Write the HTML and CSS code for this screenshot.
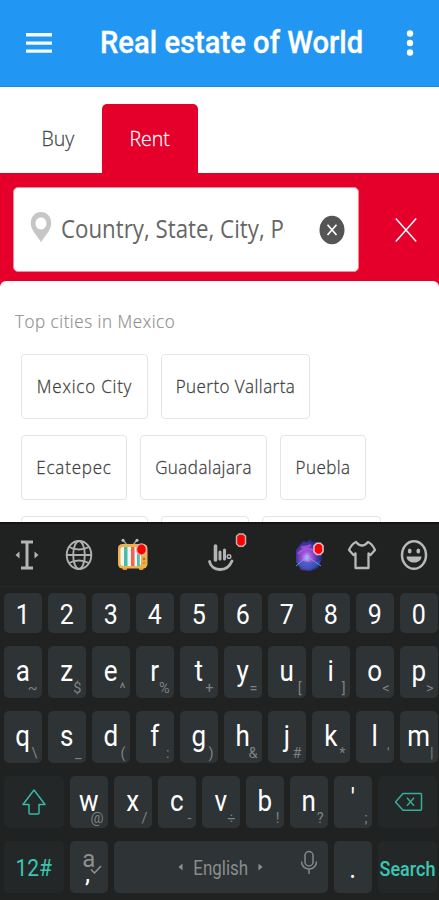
FILE: index.html
```html
<!DOCTYPE html>
<html lang="en">
<head>
<meta charset="utf-8">
<title>Real estate of World</title>
<link rel="stylesheet" href="styles.css">
</head>
<body>
<div class="screen">
  <header class="appbar">
    <svg class="menu" width="28" height="22" viewBox="0 0 28 22" fill="#f4fbff"><path d="M1 1h26v3.400H1zM1 9.400h26v3.400H1zM1 17.400h26v3.400H1z"/></svg>
    <h1 class="title"><span class="t">Real estate of World</span></h1>
    <svg class="dots" width="8" height="28" viewBox="0 0 8 28" fill="#fff"><circle cx="4" cy="4.500" r="3.200"/><circle cx="4" cy="14" r="3.200"/><circle cx="4" cy="23.500" r="3.200"/></svg>
  </header>
  <nav class="tabs">
    <a class="tab"><span class="t">Buy</span></a>
    <a class="tab active"><span class="t">Rent</span></a>
  </nav>
  <section class="search">
    <div class="field">
      <svg class="pin" width="22" height="32" viewBox="0 0 22 32"><path fill="#c6c6c6" fill-rule="evenodd" d="M11 1C5 1 .8 5.800.8 12c0 3.400 1.200 6 3 9L11 31l7.200-10c1.800-3 3-5.600 3-9C21.200 5.800 17 1 11 1Zm0 5.600c3.200 0 5.500 2.500 5.500 5.900S14.200 18.400 11 18.400s-5.500-2.500-5.500-5.900S7.800 6.600 11 6.600Z"/></svg>
      <div class="query"><span class="t">Country, State, City, Po</span></div>
      <svg class="clear" width="26" height="30" viewBox="0 0 26 30"><ellipse cx="13" cy="15" rx="12.500" ry="14.300" fill="#555"/><path d="M8.500 9.800l9 10.200M17.500 9.800l-9 10.200" stroke="#fff" stroke-width="1.700"/></svg>
    </div>
    <svg class="close" width="22" height="26" viewBox="0 0 22 26"><path d="M.8 1.500l20.400 23M21.200 1.500L.8 24.500" stroke="#fff" stroke-width="1.500"/></svg>
  </section>
  <main class="cities">
    <h2 class="heading"><span class="t">Top cities in Mexico</span></h2>
    <div class="chips">
      <div class="row"><a class="chip c126 wide"><span class="t">Mexico City</span></a><a class="chip c149"><span class="t">Puerto Vallarta</span></a></div>
      <div class="row"><a class="chip c105 wide"><span class="t">Ecatepec</span></a><a class="chip c126"><span class="t">Guadalajara</span></a><a class="chip c85"><span class="t">Puebla</span></a></div>
      <div class="row"><a class="chip c126"></a><a class="chip c88"></a><a class="chip c118"></a></div>
    </div>
  </main>
  <section class="keyboard">
    <div class="tools">
      <svg width="24" height="30" viewBox="0 0 24 30"><path d="M6 2h12M6 28h12M12 2v26" stroke="#b4b4b4" stroke-width="3" fill="none"/><path d="M4.500 11.500v7L.5 15zM19.500 11.500v7l4-3.500z" fill="#b4b4b4"/></svg>
      <svg width="28" height="32" viewBox="0 0 28 32" fill="none" stroke="#b0b0b0" stroke-width="1.900"><ellipse cx="14" cy="16" rx="12.300" ry="14"/><ellipse cx="14" cy="16" rx="5.800" ry="14"/><path d="M1.700 16h24.600M4 8q10 5 20 0M4 24q10-5 20 0"/></svg>
      <svg class="tv" width="32" height="34" viewBox="0 0 32 34"><path d="M10 7L6 2M16 7l4-5" stroke="#8e989c" stroke-width="1.600"/><circle cx="6" cy="2.300" r="1.500" fill="#b9c1c4"/><circle cx="20" cy="2.300" r="1.500" fill="#b9c1c4"/><path d="M5 29h5v3H6zM22 29h5l-1 3h-4z" fill="#d9962d"/><rect x="1" y="6" width="29.500" height="24.500" rx="4.500" fill="#ecb250"/><rect x="3.500" y="9" width="20.500" height="19" rx="3" fill="#f6f5ec"/><path d="M7 9h3.500v19H7z" fill="#45bda9"/><path d="M14 9h3.500v19H14z" fill="#ee6357"/><path d="M20 9h2.800v19H20z" fill="#4dbfae"/><circle cx="27" cy="21" r="1.400" fill="#b87825"/><path d="M25.500 25h3" stroke="#b87825"/><ellipse cx="24.500" cy="11.500" rx="5.600" ry="6.200" fill="#d4b4a4"/><ellipse cx="24.500" cy="11.500" rx="4.300" ry="4.900" fill="#f00"/></svg>
      <svg class="hand" width="44" height="42" viewBox="0 0 44 42"><path d="M8.500 13v14" stroke="#b4b4b4" stroke-width="3.600" stroke-linecap="round"/><path d="M13 19v7M17.500 17v9" stroke="#b4b4b4" stroke-width="3" stroke-linecap="round"/><circle cx="22" cy="23.500" r="1.800" fill="none" stroke="#b4b4b4" stroke-width="1.500"/><path d="M2.500 28.500C4.500 38.500 20 40 25 28" stroke="#b4b4b4" stroke-width="2.800" fill="none" stroke-linecap="round"/><path d="M29.500 3.200L32 1h4l2.500 2.200v7.600L36 13.200h-4l-2.500-2.400z" fill="#f00" stroke="#bdb3ae" stroke-width="1.500"/></svg>
      <svg width="30" height="34" viewBox="0 0 30 34"><defs><radialGradient id="orb" cx=".42" cy=".58" r=".62"><stop offset="0" stop-color="#a9c6ff"/><stop offset=".28" stop-color="#a955d8"/><stop offset=".65" stop-color="#4736a3"/><stop offset="1" stop-color="#15286e"/></radialGradient></defs><path d="M9 3l4 1 3-3 2 3 4-1 5 8 1 10-4 9-8 3-9-1-5-8V12z" fill="url(#orb)"/><path d="M2 23q5 8 13 8t12-9q-6 3-12 2T2 23" fill="#2365bd" opacity=".65"/><path d="M7 9q5 1 10-2M4 16q6-7 15-4" stroke="#b058e0" stroke-width="2.500" fill="none" opacity=".7"/><path d="M2 28l10-9 5 2 10 7" stroke="#82a6f0" stroke-width=".8" fill="none"/><path d="M20 7.800l2.800-2.600h3.600l2.600 2.600v6l-2.600 2.700h-3.600L20 13.800z" fill="#f00" stroke="#e4bdc4" stroke-width="1.600"/></svg>
      <svg width="30" height="32" viewBox="0 0 30 32"><path d="M9 3q6 7 12 0 4 1.500 7 8l-4.500 5-2-1.500V29H8.500V14.500l-2 1.500L2 11q3-6.500 7-8Z" fill="none" stroke="#b8b8b8" stroke-width="2.300" stroke-linejoin="round"/></svg>
      <svg width="28" height="32" viewBox="0 0 28 32"><ellipse cx="14" cy="16" rx="12" ry="13.800" fill="none" stroke="#b8b8b8" stroke-width="2.500"/><ellipse cx="9.700" cy="12" rx="1.900" ry="2.500" fill="#b8b8b8"/><ellipse cx="18.300" cy="12" rx="1.900" ry="2.500" fill="#b8b8b8"/><path d="M6.500 17.500h15c-.5 8-14.500 8-15 0Z" fill="#b8b8b8"/></svg>
    </div>
    <div class="keys digits"><b class="key"><i>1</i></b><b class="key"><i>2</i></b><b class="key"><i>3</i></b><b class="key"><i>4</i></b><b class="key"><i>5</i></b><b class="key"><i>6</i></b><b class="key"><i>7</i></b><b class="key"><i>8</i></b><b class="key"><i>9</i></b><b class="key"><i>0</i></b></div>
    <div class="keys"><b class="key"><i>a</i><u>~</u></b><b class="key"><i>z</i><u>$</u></b><b class="key"><i>e</i><u>^</u></b><b class="key"><i>r</i><u>%</u></b><b class="key"><i>t</i><u>+</u></b><b class="key"><i>y</i><u>=</u></b><b class="key"><i>u</i><u>[</u></b><b class="key"><i>i</i><u>]</u></b><b class="key"><i>o</i><u>&lt;</u></b><b class="key"><i>p</i><u>&gt;</u></b></div>
    <div class="keys"><b class="key"><i>q</i><u>\</u></b><b class="key"><i>s</i><u>_</u></b><b class="key"><i>d</i><u>(</u></b><b class="key"><i>f</i><u>:</u></b><b class="key"><i>g</i><u>)</u></b><b class="key"><i>h</i><u>&amp;</u></b><b class="key"><i>j</i><u>#</u></b><b class="key"><i>k</i><u>*</u></b><b class="key"><i>l</i><u>'</u></b><b class="key"><i>m</i><u>|</u></b></div>
    <div class="keys third">
      <b class="key side"><svg width="26" height="28" viewBox="0 0 26 28"><path d="M13 2L2 16.500h6V25q0 1 1 1h8q1 0 1-1v-8.500h6Z" fill="none" stroke="#38b9a6" stroke-width="1.500" stroke-linejoin="round"/></svg></b>
      <b class="key"><i>w</i><u>@</u></b><b class="key"><i>x</i><u>/</u></b><b class="key"><i>c</i><u>-</u></b><b class="key"><i>v</i><u>÷</u></b><b class="key"><i>b</i><u>!</u></b><b class="key"><i>n</i><u>?</u></b><b class="key"><i class="quote">'</i><u>;</u></b>
      <b class="key side"><svg class="erase" width="30" height="20" viewBox="0 0 30 20"><path d="M9 1.500h17.500q1 0 1 1v14.800q0 1-1 1H9L1.500 10Z" fill="none" stroke="#35ae9e" stroke-width="1.500" stroke-linejoin="round"/><path d="M13 5.800l7 8M20 5.800l-7 8" stroke="#35ae9e" stroke-width="1.400"/></svg></b>
    </div>
    <div class="keys fourth">
      <b class="key side"><span class="word num">12#</span></b>
      <b class="key alt"><span class="alt-a">a</span><span class="comma">,</span><svg class="tick" width="12" height="9" viewBox="0 0 12 9"><path d="M1 4.500L4.500 8 11 1" fill="none" stroke="#909394" stroke-width="1.500"/></svg></b>
      <b class="key space"><svg width="5" height="8" viewBox="0 0 5 8"><path d="M4.500.5v7L.5 4z" fill="#8d9091"/></svg><span class="lang">English</span><svg width="5" height="8" viewBox="0 0 5 8"><path d="M.5.5v7l4-3.500z" fill="#8d9091"/></svg>
        <svg class="mic" width="18" height="25" viewBox="0 0 18 25" fill="none" stroke="#85898a" stroke-width="1.500"><rect x="5" y="1.500" width="8" height="14.500" rx="4"/><path d="M1.500 11.500c0 10 15 10 15 0M9 19v5"/></svg></b>
      <b class="key"><i class="dot">.</i></b>
      <b class="key side"><span class="word go">Search</span></b>
    </div>
  </section>
</div>
</body>
</html>
```
FILE: styles.css
```css
* { box-sizing: border-box; }
body { margin: 0; font-family: "Open Sans", "Noto Sans", sans-serif; background: #fff; }
.screen { width: 439px; height: 900px; overflow: hidden; display: flex; flex-direction: column; }
.t { display: inline-block; white-space: nowrap; transform-origin: 0 50%; flex: none; }
svg { display: block; flex: none; }

.appbar { height: 87px; flex: none; background: #2296f3; border-bottom: 1px solid #168bea; display: flex; align-items: center; padding: 0 25px; }
.menu { margin-top: -1px; }
.title { margin: 0 auto 0 47px; font: 500 28px/40px Roboto, sans-serif; color: #fff; width: 264px; -webkit-text-stroke: .3px #fff; }
.title .t { transform: scale(1.042, 1.12); }

.tabs { height: 86px; flex: none; display: flex; align-items: flex-end; padding-left: 14px; }
.tab { width: 88px; height: 69px; display: flex; align-items: center; justify-content: center; font-size: 19px; line-height: 24px; color: #3f484b; font-weight: 300; padding-bottom: 2px; -webkit-text-stroke: .25px; }
.tab .t { transform: scale(1.03, 1.09); transform-origin: 50% 50%; }
.tab.active { width: 96px; background: #e4002b; color: #fff; border-radius: 5px 5px 0 0; }

.search { height: 114px; flex: none; background: #e4002b; display: flex; padding: 14px 22px 0 13px; }
.field { width: 346px; height: 85px; background: #fff; border: 1px solid #f58a94; border-radius: 5px; display: flex; align-items: center; padding: 0 13px 0 16px; }
.pin { margin-top: -5px; }
.query { width: 224px; overflow: hidden; margin: -4px auto 0 9px; font-size: 23px; line-height: 40px; color: #666; }
.query .t { transform: scale(.969, 1.08); }
.close { margin: 30px 0 0 auto; }

.cities { height: 241px; flex: none; background: #fff; border-radius: 6px 6px 0 0; margin-top: -6px; padding: 27px 0 0 15px; overflow: hidden; }
.heading { margin: 0; font-size: 17px; line-height: 26px; font-weight: 300; color: #8f8f8f; letter-spacing: .55px; -webkit-text-stroke: .2px; }
.heading .t { transform: scale(1, 1.1); }
.chips { display: flex; flex-direction: column; gap: 16px; padding: 20px 0 0 6px; }
.row { display: flex; gap: 13px; }
.chip { height: 65px; border: 1px solid #e4e6e6; border-radius: 4px; display: flex; align-items: center; justify-content: center; font-size: 17px; line-height: 24px; font-weight: 300; color: #3c3c3c; letter-spacing: .45px; padding-bottom: 1px; -webkit-text-stroke: .25px; }
.chip .t { transform: scale(1, 1.12); transform-origin: 50% 50%; }
.wide { letter-spacing: .8px; }
.c126 { width: 127px; }
.c149 { width: 149px; }
.c105 { width: 106px; }
.c85 { width: 86px; }
.c88 { width: 88px; }
.c118 { width: 119px; }

.keyboard { flex: 1; background: #202121; border-top: 2px solid #151515; font-family: Roboto, sans-serif; display: flex; flex-direction: column; gap: 13px; }
.tools { height: 63px; margin-bottom: -7px; border-bottom: 1px solid #282828; display: grid; grid-template-columns: 52.5px 52.5px 52.5px 125px 52.5px 52.5px 52.5px; align-items: center; justify-items: center; padding-left: .6px; }
.tv { margin-left: 2px; }
.hand { position: relative; left: 8px; top: -1px; }
.keys { height: 52px; flex: none; display: grid; grid-template-columns: repeat(10, 37.500px); column-gap: 6.500px; padding-left: 4px; }
.digits { height: 40px; }
.third { grid-template-columns: 59.5px repeat(7, 37.500px) 59px; }
.fourth { grid-template-columns: 59.5px 37.500px 213.500px 37.500px 59px; }
.key { position: relative; background: #2e3335; border-radius: 5px; display: flex; align-items: center; justify-content: center; font-weight: 400; color: #fff; }
.key i { font-style: normal; font-size: 26px; line-height: 30px; transform: scale(1, 1.12); margin-top: -3px; }
.digits i { font-size: 25px; margin-top: 3px; transform: scale(1, 1.08); }
.key u { position: absolute; right: 4px; bottom: 0; text-decoration: none; font-size: 14.500px; line-height: 18px; color: #7d8284; }
.key .quote { font-size: 24px; margin-top: -8px; }
.side { background: #232727; }
.word { color: #3ac7b3; transform: scale(1, 1.15); }
.num { font-size: 21px; margin-top: 2px; }
.go { font-size: 18px; font-weight: 500; margin-top: 3px; }
.erase { margin-left: 2px; }
.alt-a { font-size: 24px; line-height: 24px; color: #8d9091; margin-top: -16px; }
.comma { position: absolute; left: 15px; top: 17px; font-size: 26px; line-height: 30px; }
.tick { position: absolute; left: 20px; top: 24px; }
.space { gap: 10px; }
.lang { font-size: 17px; color: #898d8e; transform: scale(1, 1.15); margin-top: 1px; }
.mic { position: absolute; right: 10px; top: 9px; }
.key .dot { margin-top: 2px; }
```
